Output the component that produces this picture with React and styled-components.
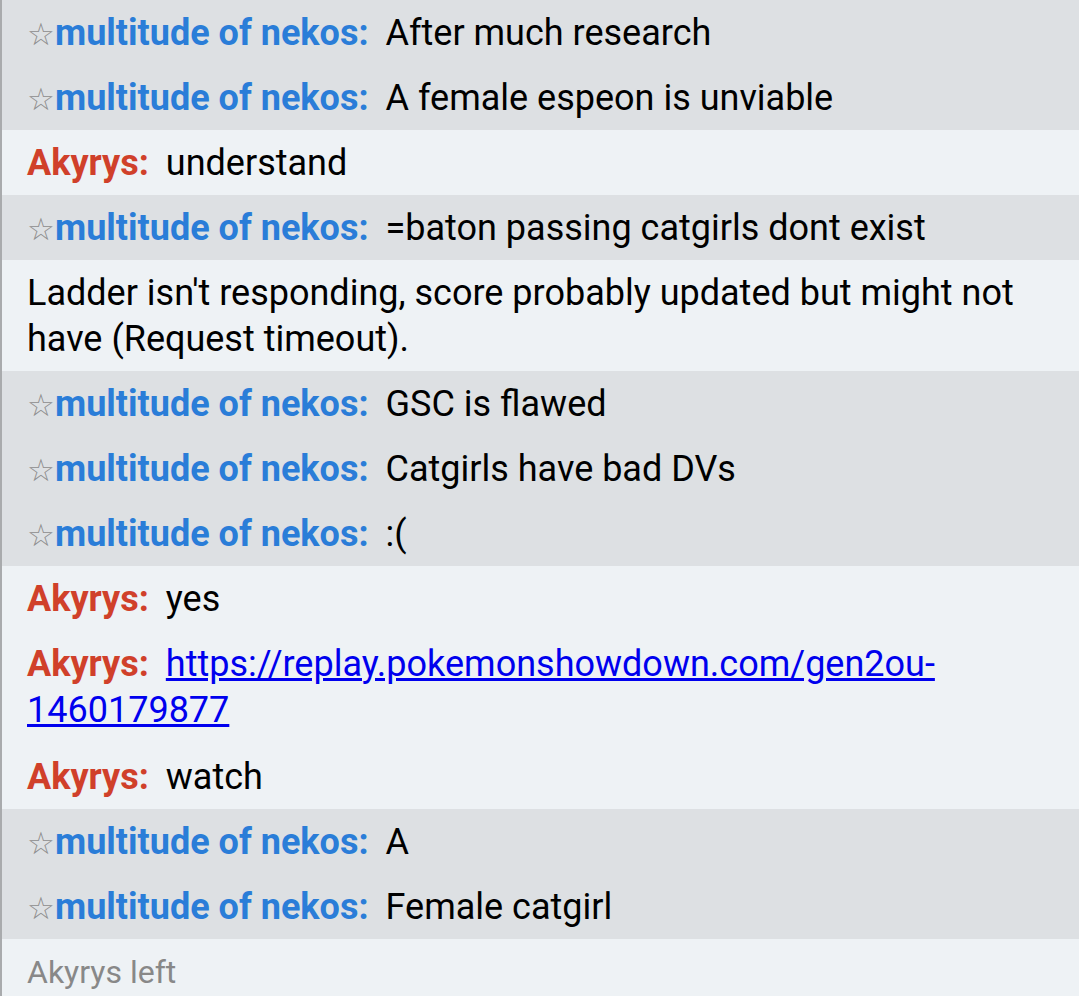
import React from 'react'
import styled, { createGlobalStyle } from 'styled-components'

const GlobalStyle = createGlobalStyle`
    html, body {
        margin: 0;
        padding: 0;
        background: #eef2f5;
    }
    body {
        font-family: Roboto, "Liberation Sans", sans-serif;
    }
`

// CONTAINERS
const Log = styled.div`
    width: 1079px;
    min-height: 996px;
    border-left: 2px solid #a9abad;
    box-sizing: border-box;
    background: #eef2f5;
    overflow: hidden;
`

const Group = styled.div`
    background: ${p => p.dark ? '#dde0e3' : '#eef2f5'};
`

const Row = styled.div`
    padding: 9.5px 30px ${p => p.wrapped ? '11.5px' : '9.5px'} 25px;
    font-size: 36px;
    line-height: 46px;
    color: #000;
    word-wrap: break-word;
`

// TEXT
const Star = styled.span`
    color: #8d8d8d;
    font-size: 31px;
    line-height: 1;
`
const Name = styled.strong`
    color: ${p => p.color};
    font-weight: 700;
    margin-right: 17px;
`
const Link = styled.a`
    color: #0000ee;
    text-decoration: underline;
`
const Notice = styled.div`
    padding: 9.5px 30px 9.5px 25px;
    font-size: 32px;
    line-height: 46px;
    color: #888;
`

const BLUE = '#2a7dd8'
const RED = '#d0402a'

const Neko = ({ children }) => (
    <Row>
        <Star>☆</Star><Name color={BLUE}>multitude of nekos:</Name>{children}
    </Row>
)
const Akyrys = ({ children, wrapped }) => (
    <Row wrapped={wrapped}>
        <Name color={RED}>Akyrys:</Name>{children}
    </Row>
)

const App = () => (
    <>
        <GlobalStyle />
        <Log>
            <Group dark>
                <Neko>After much research</Neko>
                <Neko>A female espeon is unviable</Neko>
            </Group>
            <Group>
                <Akyrys>understand</Akyrys>
            </Group>
            <Group dark>
                <Neko>=baton passing catgirls dont exist</Neko>
            </Group>
            <Group>
                <Row>Ladder isn't responding, score probably updated but might not have (Request timeout).</Row>
            </Group>
            <Group dark>
                <Neko>GSC is flawed</Neko>
                <Neko>Catgirls have bad DVs</Neko>
                <Neko>:(</Neko>
            </Group>
            <Group>
                <Akyrys>yes</Akyrys>
                <Akyrys wrapped>
                    <Link href="#">https://replay.pokemonshowdown.com/gen2ou-1460179877</Link>
                </Akyrys>
                <Akyrys>watch</Akyrys>
            </Group>
            <Group dark>
                <Neko>A</Neko>
                <Neko>Female catgirl</Neko>
            </Group>
            <Group>
                <Notice>Akyrys left</Notice>
            </Group>
        </Log>
    </>
)

export default App
